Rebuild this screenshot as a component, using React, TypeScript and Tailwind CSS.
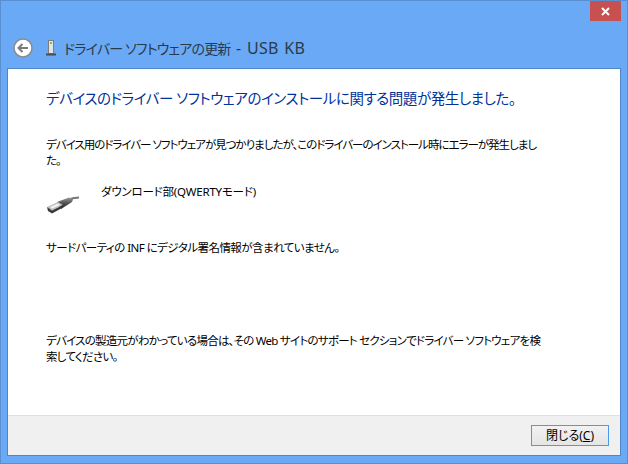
const jp = "font-['Noto_Sans','Noto_Sans_CJK_JP',sans-serif] [font-feature-settings:'palt']";

function Usb() {
  return (
    <svg width="34" height="20" viewBox="0 0 34 20">
      <defs>
        <linearGradient id="u" x1="0" y1="0" x2="0" y2="1">
          <stop offset="0" stopColor="#9a9a9a" />
          <stop offset="0.55" stopColor="#4a4a4a" />
          <stop offset="1" stopColor="#1f1f1f" />
        </linearGradient>
      </defs>
      <path d="M22 5 C25 3.500 28 2.800 33 2.500" stroke="#777" strokeWidth="2" fill="none" />
      <path d="M11 7 L23 2.500 L27 4.500 L26 7 L15 14 Z" fill="url(#u)" />
      <path d="M1 12 L12 7 L17 10 L6 15.500 Z" fill="#bdbdbd" />
      <path d="M4 12 L12 8.500 L14 10 L6 13.800 Z" fill="#f2f2f2" />
      <path d="M1 12 L6 15.500 L17 10 L17 12.500 L6 18.500 L2 16 Z" fill="#3a3a3a" />
    </svg>
  );
}

export default function App() {
  return (
    <div className={`${jp} w-[628px] h-[464px] bg-[#6aa9f5] border border-[#5a8fcf] flex flex-col overflow-hidden`}>
      <div className="h-[67px] flex flex-col pl-[12px] pr-[6px]">
        <div className="h-[20px] flex justify-end">
          <div className="w-[31px] h-[20px] bg-[#c75050] flex items-center justify-center">
            <svg width="9" height="9" viewBox="0 0 9 9"><path d="M1 1 L8 8 M8 1 L1 8" stroke="#fff" strokeWidth="2" /></svg>
          </div>
        </div>
        <div className="flex items-center mt-[15px] h-[24px]">
          <svg width="20" height="20" viewBox="0 0 20 20">
            <circle cx="10" cy="10" r="9" fill="#fff" stroke="#8b8b8b" strokeWidth="1.500" />
            <path d="M15 10 H6 M9.500 6 L5.500 10 L9.500 14" stroke="#7b7b7b" strokeWidth="2" fill="none" />
          </svg>
          <svg width="12" height="18" viewBox="0 0 12 18" className="ml-[12px]">
            <rect x="3.500" y="1.500" width="5" height="13" fill="#e4e4e4" stroke="#7d7d7d" />
            <rect x="5" y="3" width="2" height="2" fill="#7cc34d" />
            <rect x="1" y="14.500" width="10" height="2" fill="#4d4d4d" />
          </svg>
          <span className="ml-[7px] text-[14px] text-[#2b3a4a] whitespace-nowrap tracking-[-0.8px]">ドライバー ソフトウェアの更新<span className="text-[16px] tracking-[0.3px] [word-spacing:1px]"> - USB KB</span></span>
        </div>
      </div>
      <div className="mx-[6px] mb-[7px] flex-1 border border-[#4f86c6] bg-white flex flex-col">
        <div className="flex-1 flex flex-col pl-[38px] text-[11.500px] leading-[16px] text-black">
          <h1 className="mt-[18px] text-[14.500px] leading-[22px] text-[#003399] whitespace-nowrap tracking-[-0.420px] font-normal">デバイスのドライバー ソフトウェアのインストールに関する問題が発生しました。</h1>
          <p className="mt-[28px] whitespace-nowrap tracking-[-1px]">デバイス用のドライバー ソフトウェアが見つかりましたが、このドライバーのインストール時にエラーが発生しまし<br />た。</p>
          <div className="flex mt-[15px] h-[46px]">
            <div className="mt-[11px]"><Usb /></div>
            <span className="ml-[21px] tracking-[-0.2px]">ダウンロード部(QWERTYモード)</span>
          </div>
          <p className="mt-[10px] whitespace-nowrap tracking-[-0.550px]">サードパーティの INF にデジタル署名情報が含まれていません。</p>
          <p className="mt-[77px] whitespace-nowrap tracking-[-0.750px]">デバイスの製造元がわかっている場合は、その Web サイトのサポート セクションでドライバー ソフトウェアを検<br />索してください。</p>
        </div>
        <div className="h-[40px] bg-[#f0f0f0] border-t border-[#dfdfdf] flex justify-end items-start pt-[9px] pr-[11px]">
          <button className="w-[78px] h-[21px] border border-[#4a9bf0] bg-gradient-to-b from-[#f2f2f2] to-[#e5e5e5] text-[12px] leading-none text-black">閉じる(<span className="underline">C</span>)</button>
        </div>
      </div>
    </div>
  );
}
